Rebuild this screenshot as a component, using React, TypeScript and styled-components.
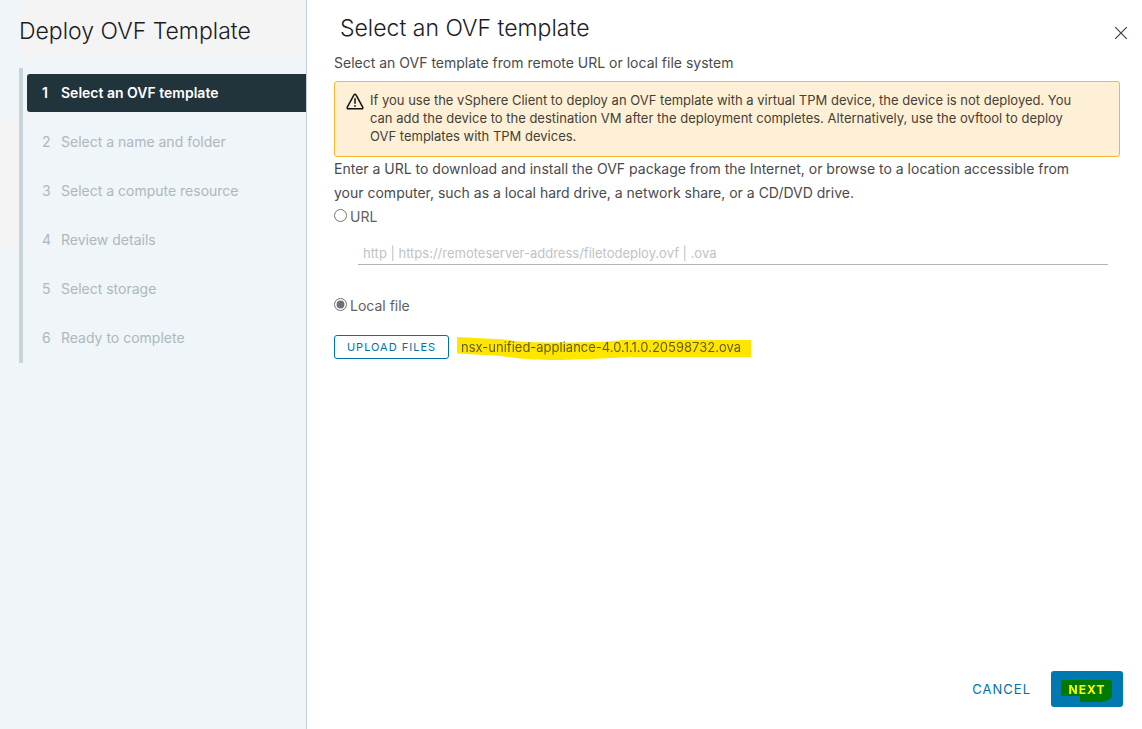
import React, { useState } from "react";
import styled, { createGlobalStyle } from "styled-components";

const GlobalStyle = createGlobalStyle`
  *, *::before, *::after { box-sizing: border-box; }
  body {
    margin: 0;
    background: #ffffff;
    color: #4a4a4a;
    font-family: Inter, "Open Sans", sans-serif;
    font-size: 14px;
    font-weight: 400;
    line-height: 24px;
  }
  button, input { font: inherit; }
`;

const Wizard = styled.div`
  display: flex;
  min-height: 100vh;
`;

const Sidebar = styled.aside`
  flex: 0 0 307px;
  padding-left: 19px;
  border-right: 1px solid #c3cfd6;
  background: linear-gradient(#f4f4f4, #f4f4f4) 0 121px / 19px 130px no-repeat, #eff5f8;
`;

const WizardTitle = styled.h1`
  margin: 0 0 9px;
  padding: 16px 0 13px;
  background: #f4f4f4;
  color: #1c1c1c;
  font-size: 23px;
  font-weight: 300;
  line-height: 30px;
`;

const Steps = styled.ol`
  display: flex;
  flex-direction: column;
  gap: 11px;
  margin: 0;
  padding: 6px 0 6px 4px;
  border-left: 4px solid #c9d4d9;
  list-style: none;
`;

const Step = styled.button<{ $active: boolean }>`
  display: flex;
  align-items: center;
  width: 100%;
  height: 38px;
  padding: 0 15px;
  border: 0;
  border-radius: 3px 0 0 3px;
  background: ${(p) => (p.$active ? "#21333b" : "transparent")};
  color: ${(p) => (p.$active ? "#ffffff" : "#aeb8bb")};
  font-weight: ${(p) => (p.$active ? 600 : 400)};
  text-align: left;
`;

const StepNumber = styled.span`
  flex: 0 0 19px;
`;

const Page = styled.main`
  display: flex;
  flex: 1;
  flex-direction: column;
  min-width: 0;
  padding: 13px 19px 22px 27px;
`;

const PageHeader = styled.header`
  display: flex;
  align-items: flex-start;
  justify-content: space-between;
  margin-right: -5px;
  padding-left: 6px;
`;

const PageTitle = styled.h2`
  margin: 0;
  color: #1c1c1c;
  font-size: 23px;
  font-weight: 300;
  line-height: 30px;
`;

const CloseButton = styled.button`
  display: flex;
  margin-top: 13px;
  padding: 0;
  border: 0;
  background: none;
`;

const Content = styled.div`
  flex: 1;
  margin-right: 3px;
`;

const Text = styled.p`
  margin: 0;
`;

const Intro = styled(Text)`
  padding: 8px 0 6px;
`;

const Instructions = styled(Text)`
  padding-right: 24px;
`;

const Alert = styled.div`
  display: flex;
  gap: 6px;
  padding: 9px 32px 11px 11px;
  border: 1px solid #fdb72e;
  border-radius: 3px;
  background: #fef0d6;
  color: #454035;
  font-size: 13px;
  line-height: 18px;
`;

const AlertIcon = styled.svg`
  flex: none;
`;

const Choice = styled.label`
  display: flex;
  align-items: center;
  gap: 3px;
  color: #616161;
`;

const Radio = styled.input`
  width: 13px;
  height: 13px;
  margin: 0 0 3px;
  accent-color: #707070;
`;

const UrlInput = styled.input`
  display: block;
  width: calc(100% - 36px);
  height: 24px;
  margin: 12px 12px 29px 24px;
  padding: 0 5px;
  border: 0;
  border-bottom: 1px solid #b3b3b3;
  background: transparent;
  font-size: 13px;
  outline: none;

  &::placeholder { color: #c2c2c2; opacity: 1; }
`;

const UploadRow = styled.div`
  display: flex;
  align-items: center;
  gap: 8px;
  margin-top: 17px;
`;

const Button = styled.button`
  height: 36px;
  padding: 0 16px;
  border: 1px solid transparent;
  border-radius: 3px;
  background: transparent;
  color: #0072a3;
  font-size: 13px;
  letter-spacing: 1px;
  line-height: 22px;
  text-transform: uppercase;
`;

const UploadButton = styled(Button)`
  width: 115px;
  height: 24px;
  padding: 0;
  border-color: #0072a3;
  font-size: 11px;
`;

const PrimaryButton = styled(Button)`
  width: 72px;
  padding: 1px 0 0;
  background: #0079b1;
  color: #ffffff;
  font-size: 12px;
  font-weight: 700;
`;

const Marked = styled.span`
  position: relative;
  display: inline-block;
  isolation: isolate;
`;

const FileName = styled(Marked)`
  width: 294px;
  padding-left: 4px;
  color: #666666;
  font-size: 13px;
`;

const Marker = styled.svg`
  position: absolute;
  top: 0;
  left: 0;
  mix-blend-mode: multiply;
  pointer-events: none;
`;

const NextLabel = styled(Marked)`
  width: 52px;
  background: #0079b1;
  line-height: 24px;
`;

const Footer = styled.footer`
  display: flex;
  justify-content: flex-end;
  gap: 3px;
`;

const steps = [
  "Select an OVF template",
  "Select a name and folder",
  "Select a compute resource",
  "Review details",
  "Select storage",
  "Ready to complete",
];

export default function App() {
  const [source, setSource] = useState("local");

  return (
    <Wizard>
      <GlobalStyle />
      <Sidebar>
        <WizardTitle>Deploy OVF Template</WizardTitle>
        <nav aria-label="Wizard steps">
          <Steps>
            {steps.map((label, i) => (
              <li key={label}>
                <Step type="button" $active={i === 0} aria-current={i === 0 ? "step" : undefined}>
                  <StepNumber>{i + 1}</StepNumber>
                  {label}
                </Step>
              </li>
            ))}
          </Steps>
        </nav>
      </Sidebar>
      <Page>
        <PageHeader>
          <PageTitle>Select an OVF template</PageTitle>
          <CloseButton type="button" aria-label="Close">
            <svg width="14" height="14" viewBox="0 0 14 14" fill="none" stroke="#314351" strokeWidth="1.2">
              <path d="M1.2 1.2 12.8 12.8M12.8 1.2 1.2 12.8" />
            </svg>
          </CloseButton>
        </PageHeader>
        <Content>
          <Intro>Select an OVF template from remote URL or local file system</Intro>
          <Alert role="alert">
            <AlertIcon width="18" height="20" viewBox="0 -1 18 20" fill="none" stroke="#111111" strokeLinejoin="round" strokeLinecap="round">
              <path d="M9 2.2c.5 0 .8.3 1 .6l6.7 12.4c.4.8 0 1.6-.9 1.6H2.200c-.9 0-1.300-.8-.9-1.600L8 2.800c.2-.3.500-.6 1-.6Z" strokeWidth="1.5" />
              <path d="M9 6.800v4.400" strokeWidth="1.5" />
              <circle cx="9" cy="13.9" r=".9" fill="#111111" stroke="none" />
            </AlertIcon>
            <Text>
              If you use the vSphere Client to deploy an OVF template with a virtual TPM device, the device is not
              deployed. You can add the device to the destination VM after the deployment completes. Alternatively, use
              the ovftool to deploy OVF templates with TPM devices.
            </Text>
          </Alert>
          <Instructions>
            Enter a URL to download and install the OVF package from the Internet, or browse to a location accessible
            from your computer, such as a local hard drive, a network share, or a CD/DVD drive.
          </Instructions>
          <Choice>
            <Radio type="radio" name="source" checked={source === "url"} onChange={() => setSource("url")} />
            URL
          </Choice>
          <UrlInput
            type="text"
            aria-label="URL"
            placeholder="http | https://remoteserver-address/filetodeploy.ovf | .ova"
          />
          <Choice>
            <Radio type="radio" name="source" checked={source === "local"} onChange={() => setSource("local")} />
            Local file
          </Choice>
          <UploadRow>
            <UploadButton type="button">Upload files</UploadButton>
            <FileName>
              nsx-unified-appliance-4.0.1.1.0.20598732.ova
              <Marker width="294" height="26" viewBox="0 0 294 26">
                <path
                  d="M0 2 48 4.500C60 7 75 7.500 95 7.500S150 7.500 165 5H294V22H185C165 22 140 24.500 95 25C70 25 55 23 45 21L0 18.500Z"
                  fill="#ffe600"
                />
              </Marker>
            </FileName>
          </UploadRow>
        </Content>
        <Footer>
          <Button type="button">Cancel</Button>
          <PrimaryButton type="button">
            <NextLabel>
              Next
              <Marker width="52" height="24" viewBox="0 0 52 24">
                <path d="M0 2H48Q51 2 51 5V19Q47 24 38 24H19V18H0Z" fill="#ffff00" />
              </Marker>
            </NextLabel>
          </PrimaryButton>
        </Footer>
      </Page>
    </Wizard>
  );
}
